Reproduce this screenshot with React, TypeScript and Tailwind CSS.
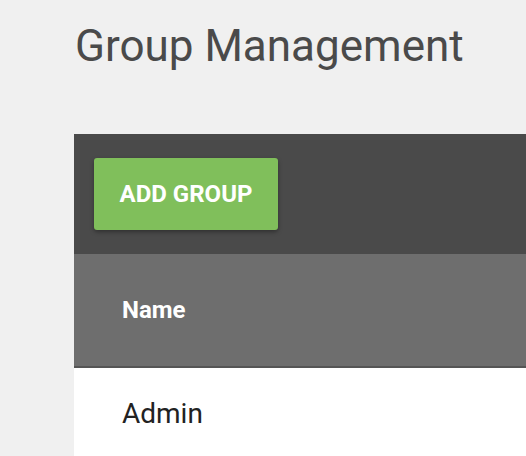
export default function App() {
  return (
    <div
      className="min-h-[456px] w-[526px] overflow-hidden bg-[#f0f0f0] pl-[74px] pt-[16px]"
      style={{ fontFamily: "Roboto, 'Liberation Sans', sans-serif" }}
    >
      <h1 className="h-[60px] pl-[1px] text-[44px] leading-[60px] text-[#4a4a4a]">Group Management</h1>

      <div className="mt-[58px] w-[600px]">
        <div className="bg-[#4a4a4a] px-[20px] py-[24px]">
          <button className="h-[72px] w-[184px] rounded-[3px] bg-[#80bf5b] text-[24px] font-bold text-white shadow-[0_2px_4px_rgba(0,0,0,0.35)]">
            ADD GROUP
          </button>
        </div>
        <div className="flex h-[114px] items-center border-b-2 border-[#555555] bg-[#6e6e6e] pl-[48px]">
          <span className="text-[24px] font-bold text-white">Name</span>
        </div>
        <div className="flex h-[92px] items-center bg-white pl-[48px]">
          <span className="text-[28px] text-[#222222]">Admin</span>
        </div>
      </div>
    </div>
  );
}
